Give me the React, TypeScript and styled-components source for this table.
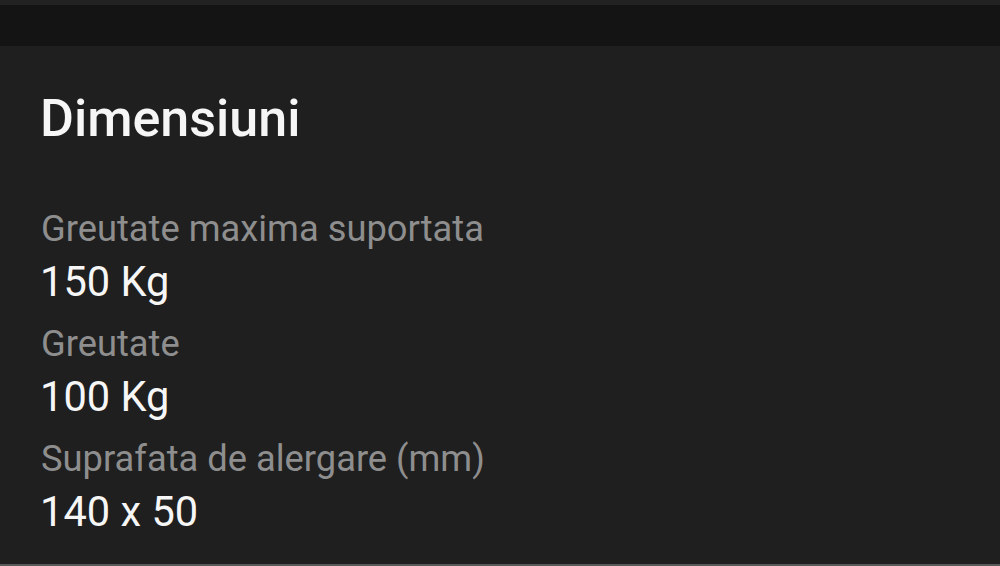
import styled, { createGlobalStyle } from "styled-components";

const GlobalStyle = createGlobalStyle`
  html, body {
    margin: 0;
    padding: 0;
    background-color: #1f1f1f;
  }
  body {
    font-family: Roboto, "Noto Sans", "Liberation Sans", sans-serif;
  }
`;

const Page = styled.div`
  width: 100vw;
  height: 100vh;
  display: flex;
  flex-direction: column;
  background-color: #1f1f1f;
  overflow: hidden;
`;

const TopStrip = styled.div`
  height: 5px;
  background-color: #222222;
`;

const HeaderBar = styled.div`
  height: 41px;
  background-color: #141414;
`;

const Section = styled.section`
  flex: 1;
  display: flex;
  flex-direction: column;
  padding: 43px 40px 0 40px;
  border-bottom: 2px solid #5a5a5a;
`;

const Title = styled.h2`
  margin: 0 0 60px 0;
  font-size: 52px;
  line-height: 60px;
  font-weight: 500;
  color: #f6f6f6;
`;

const SpecList = styled.div`
  display: flex;
  flex-direction: column;
  gap: 20px;
`;

const SpecItem = styled.div`
  display: flex;
  flex-direction: column;
  gap: 11px;
`;

const Label = styled.div`
  font-size: 36.3px;
  line-height: 40px;
  color: #8e8e8e;
  padding-left: 1px;
`;

const Value = styled.div`
  font-size: 41.6px;
  line-height: 44px;
  color: #f6f6f6;
`;

const specs = [
  { label: "Greutate maxima suportata", value: "150 Kg" },
  { label: "Greutate", value: "100 Kg" },
  { label: "Suprafata de alergare (mm)", value: "140 x 50" },
];

function App() {
  return (
    <>
      <GlobalStyle />
      <Page>
        <TopStrip />
        <HeaderBar />
        <Section>
          <Title>Dimensiuni</Title>
          <SpecList>
            {specs.map((s) => (
              <SpecItem key={s.label}>
                <Label>{s.label}</Label>
                <Value>{s.value}</Value>
              </SpecItem>
            ))}
          </SpecList>
        </Section>
      </Page>
    </>
  );
}

export default App;
